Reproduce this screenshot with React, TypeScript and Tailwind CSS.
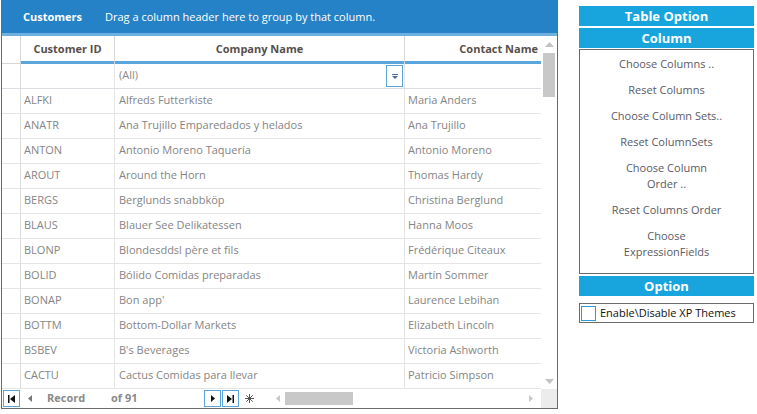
const rows: [string, string, string][] = [
  ['ALFKI', 'Alfreds Futterkiste', 'Maria Anders'],
  ['ANATR', 'Ana Trujillo Emparedados y helados', 'Ana Trujillo'],
  ['ANTON', 'Antonio Moreno Taquería', 'Antonio Moreno'],
  ['AROUT', 'Around the Horn', 'Thomas Hardy'],
  ['BERGS', 'Berglunds snabbköp', 'Christina Berglund'],
  ['BLAUS', 'Blauer See Delikatessen', 'Hanna Moos'],
  ['BLONP', 'Blondesddsl père et fils', 'Frédérique Citeaux'],
  ['BOLID', 'Bólido Comidas preparadas', 'Martín Sommer'],
  ['BONAP', "Bon app'", 'Laurence Lebihan'],
  ['BOTTM', 'Bottom-Dollar Markets', 'Elizabeth Lincoln'],
  ['BSBEV', "B's Beverages", 'Victoria Ashworth'],
  ['CACTU', 'Cactus Comidas para llevar', 'Patricio Simpson'],
];

const columnActions: string[][] = [
  ['Choose Columns ..'],
  ['Reset Columns'],
  ['Choose Column Sets..'],
  ['Reset ColumnSets'],
  ['Choose Column', 'Order ..'],
  ['Reset Columns Order'],
  ['Choose', 'ExpressionFields'],
];

function PanelBar({ label }: { label: string }) {
  return (
    <div className="h-[20px] bg-[#18a5dd] text-white font-bold text-[13px] leading-[20px] text-center">
      {label}
    </div>
  );
}

function NavButton({ children }: { children: React.ReactNode }) {
  return (
    <div className="w-[17px] h-[17px] shrink-0 border border-[#5aa5dc] flex items-center justify-center">
      {children}
    </div>
  );
}

function Grid() {
  return (
    <div className="ml-px w-[557px] h-[409px] shrink-0 border-x border-b border-[#6b6b6b] flex flex-col">
      {/* Group by panel */}
      <div className="h-[33px] bg-[#2582c6] flex items-center text-white text-[11px] pt-px">
        <span className="font-bold ml-[21px] w-[82px]">Customers</span>
        <span>Drag a column header here to group by that column.</span>
      </div>
      <div className="h-[3px] bg-[#6eb1df]" />

      <div className="flex h-[353px]">
        <div className="w-[539px] flex flex-col overflow-hidden">
          {/* Header */}
          <div className="grid grid-cols-[19px_94px_290px_1fr] h-[28px]">
            <div className="border-r border-b border-[#d6d6d6]" />
            <div className="border-r border-[#d6d6d6] flex flex-col">
              <div className="flex-1 flex items-center justify-center font-bold text-[#574f4a] pt-[2px]">Customer ID</div>
              <div className="h-[3px] bg-[#5aa5dc]" />
            </div>
            <div className="border-r border-[#d6d6d6] flex flex-col">
              <div className="flex-1 flex items-center justify-center font-bold text-[#574f4a] pt-[2px]">Company Name</div>
              <div className="h-[3px] bg-[#5aa5dc]" />
            </div>
            <div className="flex flex-col">
              <div className="flex-1 flex items-center justify-end pr-[3px] font-bold text-[#574f4a] pt-[2px] whitespace-nowrap">Contact Name</div>
              <div className="h-[3px] bg-[#5aa5dc]" />
            </div>
          </div>

          {/* Filter row */}
          <div className="grid grid-cols-[19px_94px_290px_1fr] h-[25px] border-b border-[#dcdde3]">
            <div className="border-r border-[#dcdcdc]" />
            <div className="border-r border-[#e4e4e4]" />
            <div className="border-r border-[#e4e4e4] flex items-center justify-between pl-[4px] pr-px text-[#8a8a8a]">
              <span className="pb-px">(All)</span>
              <div className="w-[17px] h-[22px] border border-[#5aa5dc] flex items-center justify-center">
                <svg width="6" height="5" viewBox="0 0 6 5">
                  <rect x="0" y="0" width="6" height="1" fill="#4b6b9e" />
                  <path d="M0 2 L6 2 L3 5 Z" fill="#4b6b9e" />
                </svg>
              </div>
            </div>
            <div />
          </div>

          {/* Data rows */}
          {rows.map(([id, company, contact]) => (
            <div key={id} className="grid grid-cols-[19px_94px_290px_1fr] h-[25px] border-b border-[#e4e4e4] text-[#858585]">
              <div className="border-r border-[#dcdcdc]" />
              <div className="border-r border-[#e4e4e4] flex items-center pl-[3px] pb-px">{id}</div>
              <div className="border-r border-[#e4e4e4] flex items-center pl-[4px] pb-px whitespace-nowrap">{company}</div>
              <div className="flex items-center pl-[3px] pb-px whitespace-nowrap">{contact}</div>
            </div>
          ))}
        </div>

        {/* Vertical scrollbar */}
        <div className="w-[16px] flex flex-col items-center">
          <svg className="mt-[6px]" width="9" height="5" viewBox="0 0 9 5">
            <path d="M0 5 L4.5 0 L9 5 Z" fill="#c2c2c2" />
          </svg>
          <div className="mt-[6px] w-[12px] h-[44px] bg-[#c8c8c8]" />
          <div className="flex-1" />
          <svg className="mb-[5px]" width="9" height="5" viewBox="0 0 9 5">
            <path d="M0 0 L9 0 L4.5 5 Z" fill="#c2c2c2" />
          </svg>
        </div>
      </div>

      {/* Footer navigator */}
      <div className="h-[19px] flex items-center text-[11px] font-bold text-[#8a8a8a] whitespace-nowrap">
        <div className="ml-[1px]">
          <NavButton>
            <svg width="7" height="8" viewBox="0 0 7 8">
              <rect x="0" y="0" width="1.5" height="8" fill="#111" />
              <path d="M7 0 L2 4 L7 8 Z" fill="#111" />
            </svg>
          </NavButton>
        </div>
        <svg className="ml-[8px] shrink-0" width="4" height="7" viewBox="0 0 4 7">
          <path d="M4 0 L0 3.5 L4 7 Z" fill="#777" />
        </svg>
        <span className="ml-[15px] w-[64px] shrink-0">Record</span>
        <span className="w-[93px] shrink-0">of 91</span>
        <div>
          <NavButton>
            <svg width="4" height="7" viewBox="0 0 4 7">
              <path d="M0 0 L4 3.5 L0 7 Z" fill="#111" />
            </svg>
          </NavButton>
        </div>
        <div className="ml-px">
          <NavButton>
            <svg width="7" height="8" viewBox="0 0 7 8">
              <path d="M0 0 L5 4 L0 8 Z" fill="#111" />
              <rect x="5.5" y="0" width="1.5" height="8" fill="#111" />
            </svg>
          </NavButton>
        </div>
        <svg className="ml-[6px] shrink-0" width="9" height="9" viewBox="0 0 9 9">
          <g stroke="#555" strokeWidth="1">
            <line x1="4.5" y1="0" x2="4.5" y2="9" />
            <line x1="0" y1="4.5" x2="9" y2="4.5" />
            <line x1="1.3" y1="1.3" x2="7.7" y2="7.7" />
            <line x1="7.7" y1="1.3" x2="1.3" y2="7.7" />
          </g>
        </svg>
        {/* Horizontal scrollbar */}
        <div className="ml-[22px] flex-1 h-full flex items-center">
          <svg className="shrink-0" width="4" height="7" viewBox="0 0 4 7">
            <path d="M4 0 L0 3.5 L4 7 Z" fill="#c8c8c8" />
          </svg>
          <div className="ml-[5px] w-[68px] h-[13px] bg-[#c8c8c8]" />
          <div className="flex-1" />
          <svg className="mr-[7px] shrink-0" width="4" height="7" viewBox="0 0 4 7">
            <path d="M0 0 L4 3.5 L0 7 Z" fill="#c8c8c8" />
          </svg>
        </div>
        <div className="ml-px w-[16px] h-full shrink-0 bg-[#ececec]" />
      </div>
    </div>
  );
}

function SidePanel() {
  return (
    <div className="ml-[21px] mt-[6px] w-[175px] flex flex-col text-[11px]">
      <PanelBar label="Table Option" />
      <div className="h-[2px]" />
      <PanelBar label="Column" />
      <div className="mt-px h-[225px] border border-[#6b6b6b] pt-[1px] flex flex-col">
        {columnActions.map((lines) => (
          <div
            key={lines.join(' ')}
            className="flex flex-col items-center justify-center text-[#5a5a66] leading-[16px] py-[5px]"
          >
            {lines.map((l) => (
              <span key={l}>{l}</span>
            ))}
          </div>
        ))}
      </div>
      <div className="h-[2px]" />
      <PanelBar label="Option" />
      <div className="mt-[7px] h-[20px] border border-[#6b6b6b] flex items-center">
        <div className="ml-px w-[15px] h-[15px] border border-[#2a9ad8] bg-white" />
        <span className="ml-[4px] text-[#111]">Enable\Disable XP Themes</span>
      </div>
    </div>
  );
}

export default function App() {
  return (
    <div className="w-[757px] h-[414px] bg-white flex font-['Open_Sans',sans-serif] text-[11px] overflow-hidden">
      <Grid />
      <SidePanel />
    </div>
  );
}
